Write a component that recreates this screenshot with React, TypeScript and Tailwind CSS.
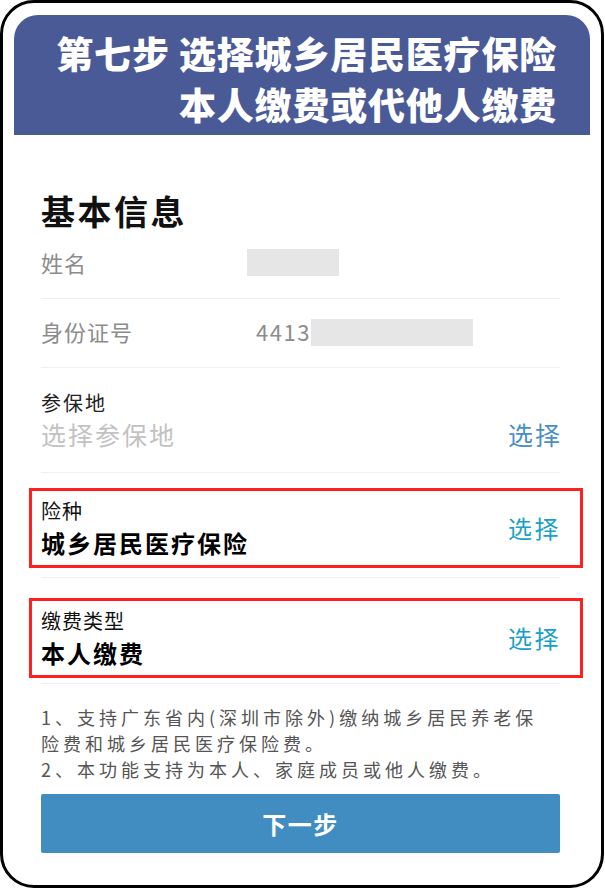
const cjk = "font-['Noto_Sans_CJK_SC','Noto_Sans',sans-serif]";

function PlainRow({ label, children, className }: { label: string; children: React.ReactNode; className: string }) {
  return (
    <div className={`flex items-center border-b border-[#efefef] ${className}`}>
      <span className="w-[206px] shrink-0 text-[22px] leading-[26px] tracking-[1px] text-[#8c8c8c]">{label}</span>
      <div className="flex items-center">{children}</div>
    </div>
  );
}

function PickRow({ label, value }: { label: string; value: string }) {
  return (
    <div className="ml-[-12px] mr-[-23px] flex h-[80px] items-center justify-between border-[3px] border-[#ff1f1f] pl-[9px] pr-[19px]">
      <div className="flex flex-col">
        <span className="text-[20px] leading-[24px] tracking-[1px] text-[#111]">{label}</span>
        <span className="mt-[5px] text-[24px] font-bold leading-[30px] tracking-[2px] text-black">{value}</span>
      </div>
      <span className="text-[24px] leading-[28px] tracking-[2.5px] text-[#17a0c8]">选择</span>
    </div>
  );
}

export default function App() {
  return (
    <div className={`h-[890px] w-[605px] bg-white ${cjk}`}>
      <div className="flex h-[888px] w-[604px] flex-col rounded-[34px] border-[3px] border-black bg-white">
        <div className="mx-[11px] mt-[12px] h-[120px] rounded-t-[24px] bg-[#4a5a97] pr-[33px] pt-[13px] text-right text-[37px] font-black leading-[51px] tracking-[0.8px] text-white">
          <div>第七步 选择城乡居民医疗保险</div>
          <div>本人缴费或代他人缴费</div>
        </div>

        <div className="flex flex-col pl-[38px] pr-[41px]">
          <div className="mt-[45px] flex h-[60px] items-center text-[34px] font-bold tracking-[2.5px] text-[#111]">
            基本信息
          </div>

          <PlainRow label="姓名" className="h-[59px] pb-[14px]">
            <div className="h-[27px] w-[92px] bg-[#e6e6e6]" />
          </PlainRow>

          <PlainRow label="身份证号" className="h-[69px] pb-[4px]">
            <span className="ml-[9px] text-[22px] leading-[26px] tracking-[1.5px] text-[#8c8c8c]">4413</span>
            <div className="mt-[3px] h-[27px] w-[162px] bg-[#e6e6e6]" />
          </PlainRow>

          <div className="flex h-[105px] flex-col border-b border-[#efefef] pt-[23px]">
            <span className="text-[20px] leading-[24px] tracking-[2px] text-[#222]">参保地</span>
            <div className="mt-[4px] flex items-center justify-between">
              <span className="text-[25px] leading-[30px] tracking-[2px] text-[#c2c2c2]">选择参保地</span>
              <span className="mr-[-2px] text-[25px] leading-[30px] tracking-[2px] text-[#4a8fc4]">选择</span>
            </div>
          </div>

          <div className="mt-[15px]">
            <PickRow label="险种" value="城乡居民医疗保险" />
          </div>
          <div className="mt-[9px] h-px bg-[#efefef]" />

          <div className="mt-[20px]">
            <PickRow label="缴费类型" value="本人缴费" />
          </div>
          <div className="mt-[5px] h-px bg-[#efefef]" />

          <div className="mt-[20px] w-[505px] text-[18px] leading-[26px] tracking-[4px] text-[#555]">
            <p>1、支持广东省内(深圳市除外)缴纳城乡居民养老保险费和城乡居民医疗保险费。</p>
            <p>2、本功能支持为本人、家庭成员或他人缴费。</p>
          </div>

          <button className="mt-[12px] flex h-[59px] w-[519px] items-center justify-center rounded-[2px] bg-[#418dc1] text-[24px] font-bold tracking-[1.5px] text-white">
            下一步
          </button>
        </div>
      </div>
    </div>
  );
}
